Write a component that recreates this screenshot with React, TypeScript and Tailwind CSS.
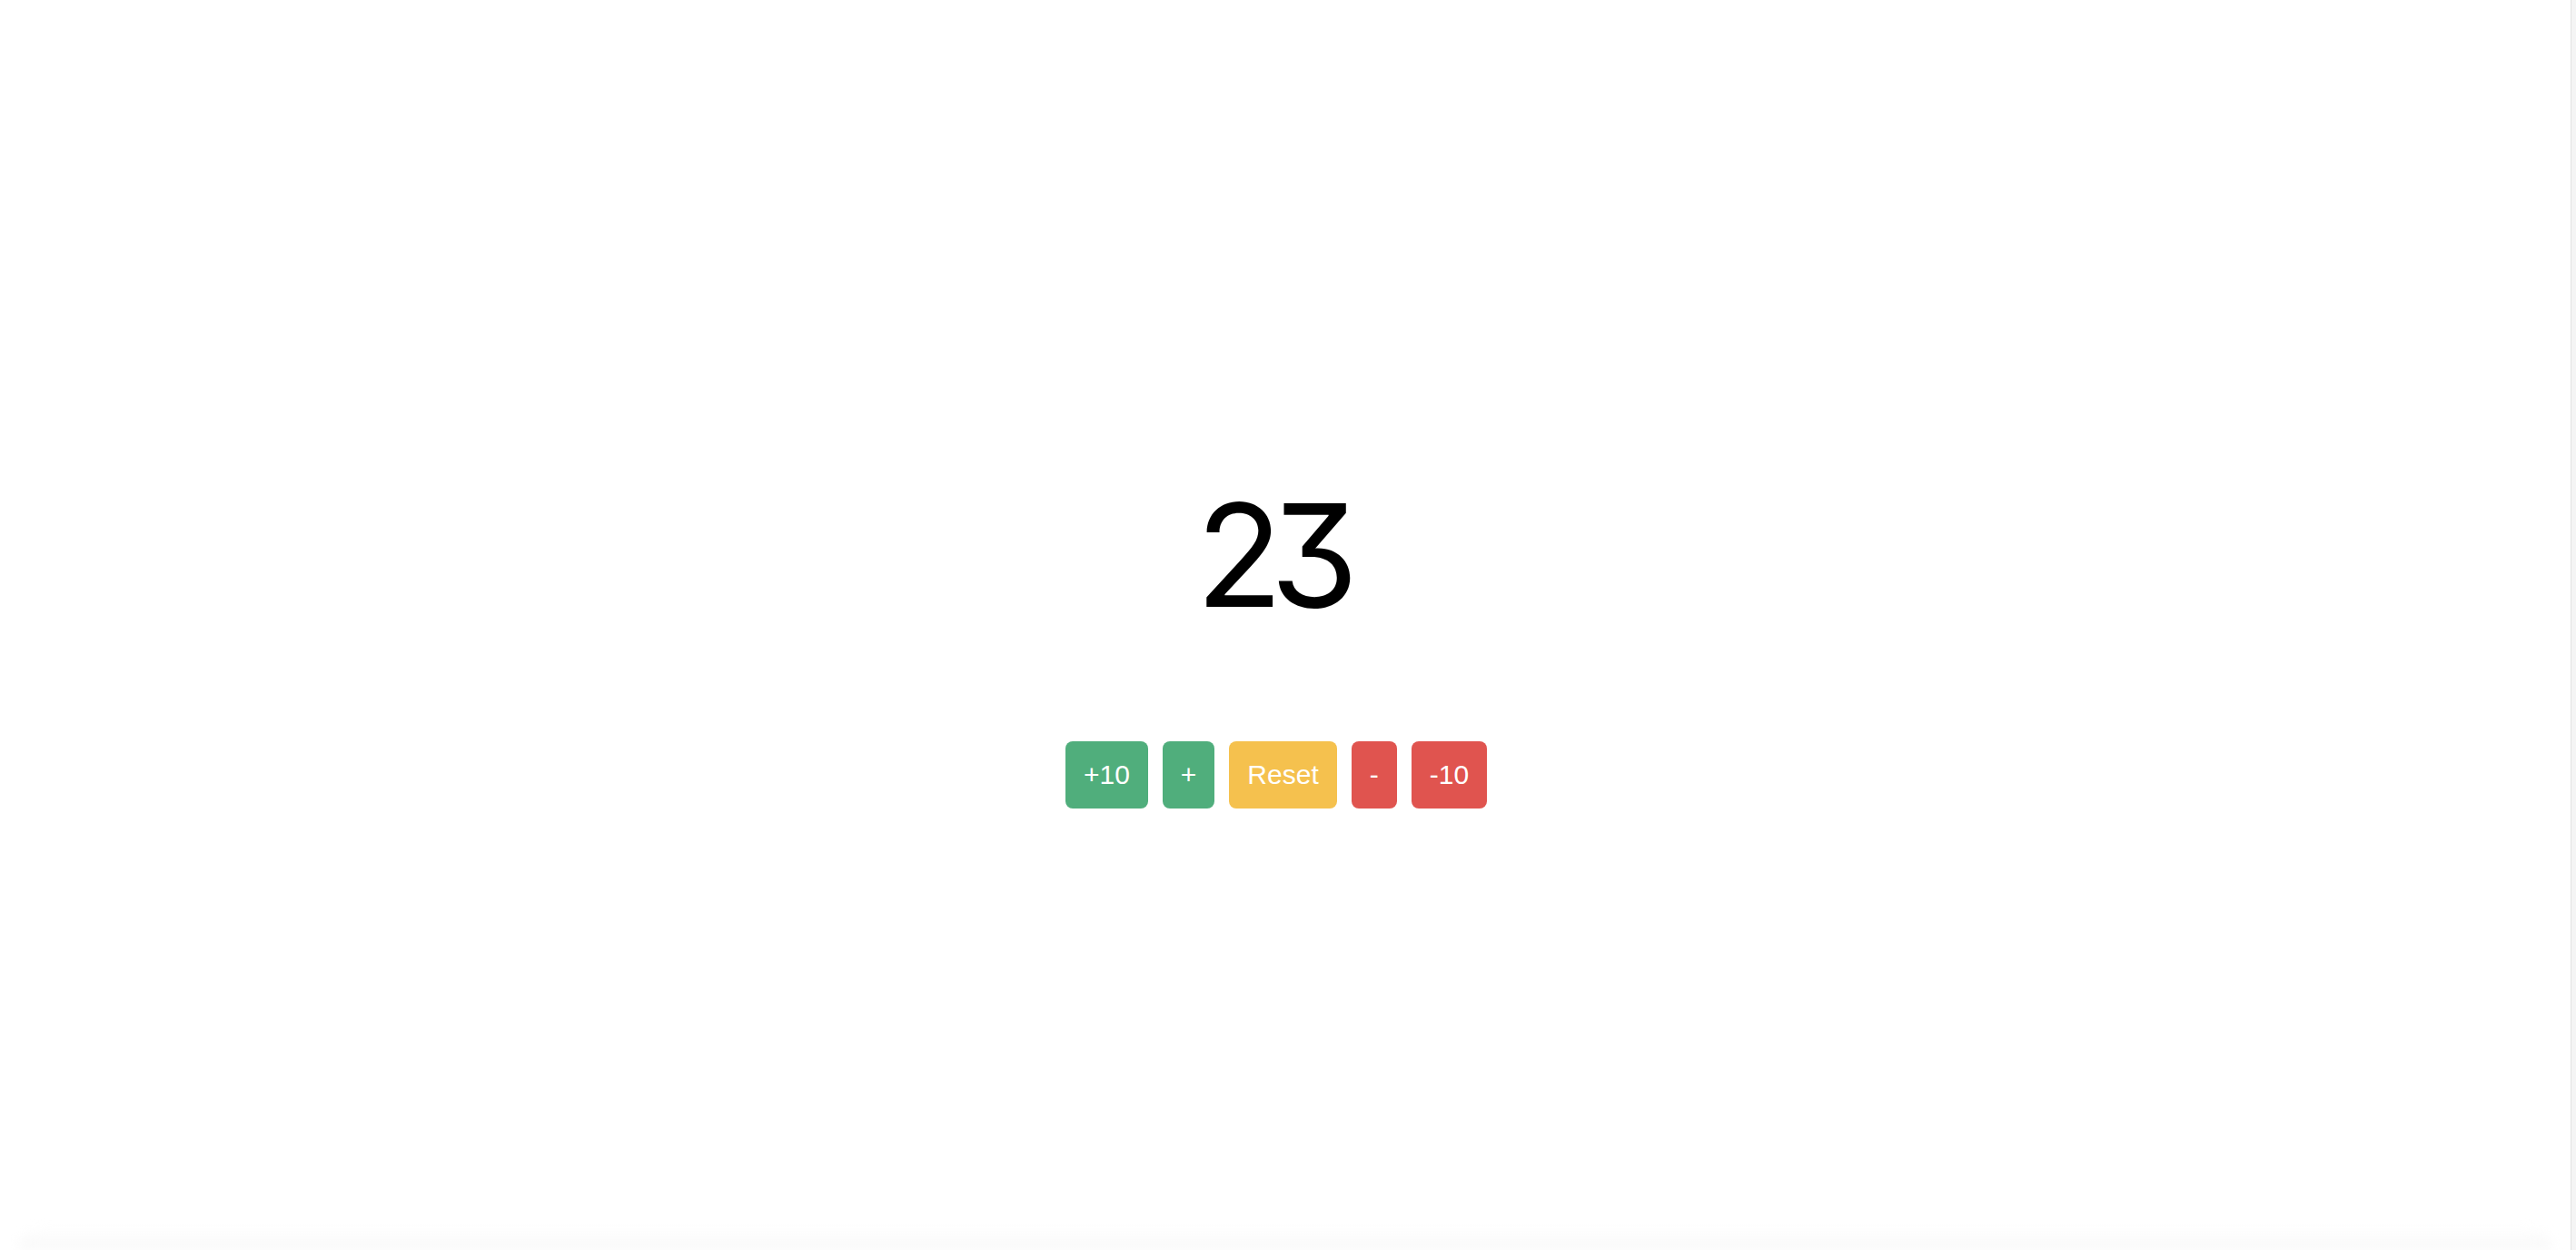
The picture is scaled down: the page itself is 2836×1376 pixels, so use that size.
import { useState } from 'react';

export default function App() {
  const [count, setCount] = useState(23);

  const buttons = [
    { label: '+10', delta: 10, color: 'bg-[#50ae7c]' },
    { label: '+', delta: 1, color: 'bg-[#50ae7c]' },
    { label: 'Reset', delta: null, color: 'bg-[#f5c14e]' },
    { label: '-', delta: -1, color: 'bg-[#e0544f]' },
    { label: '-10', delta: -10, color: 'bg-[#e0544f]' },
  ];

  return (
    <div className="flex h-[1376px] w-full overflow-hidden bg-white">
      <main className="flex flex-1 flex-col">
        <div className="flex flex-1 flex-col items-center pt-[534px] pr-[20px]">
          <div className="pr-[12px] font-['Inter',sans-serif] text-[157px] leading-[155px] font-normal tracking-[-14px] text-black [font-feature-settings:'cv09']">
            {count}
          </div>
          <div className="mt-[127px] flex gap-4">
            {buttons.map((b) => (
              <button
                key={b.label}
                onClick={() => setCount(b.delta === null ? 0 : count + b.delta)}
                className={`${b.color} rounded-lg px-[20px] py-[20px] font-['Liberation_Sans',Arial,sans-serif] text-[30px] leading-[34px] text-white`}
              >
                {b.label}
              </button>
            ))}
          </div>
        </div>
        <div className="mx-[20px] h-[26px] rounded-t-[60px] bg-gradient-to-b from-white to-[#f8f8f8] blur-[6px]" />
      </main>
      <div className="w-[6px] border-l border-[#e2e2e2] bg-[#f4f4f4]" />
    </div>
  );
}
